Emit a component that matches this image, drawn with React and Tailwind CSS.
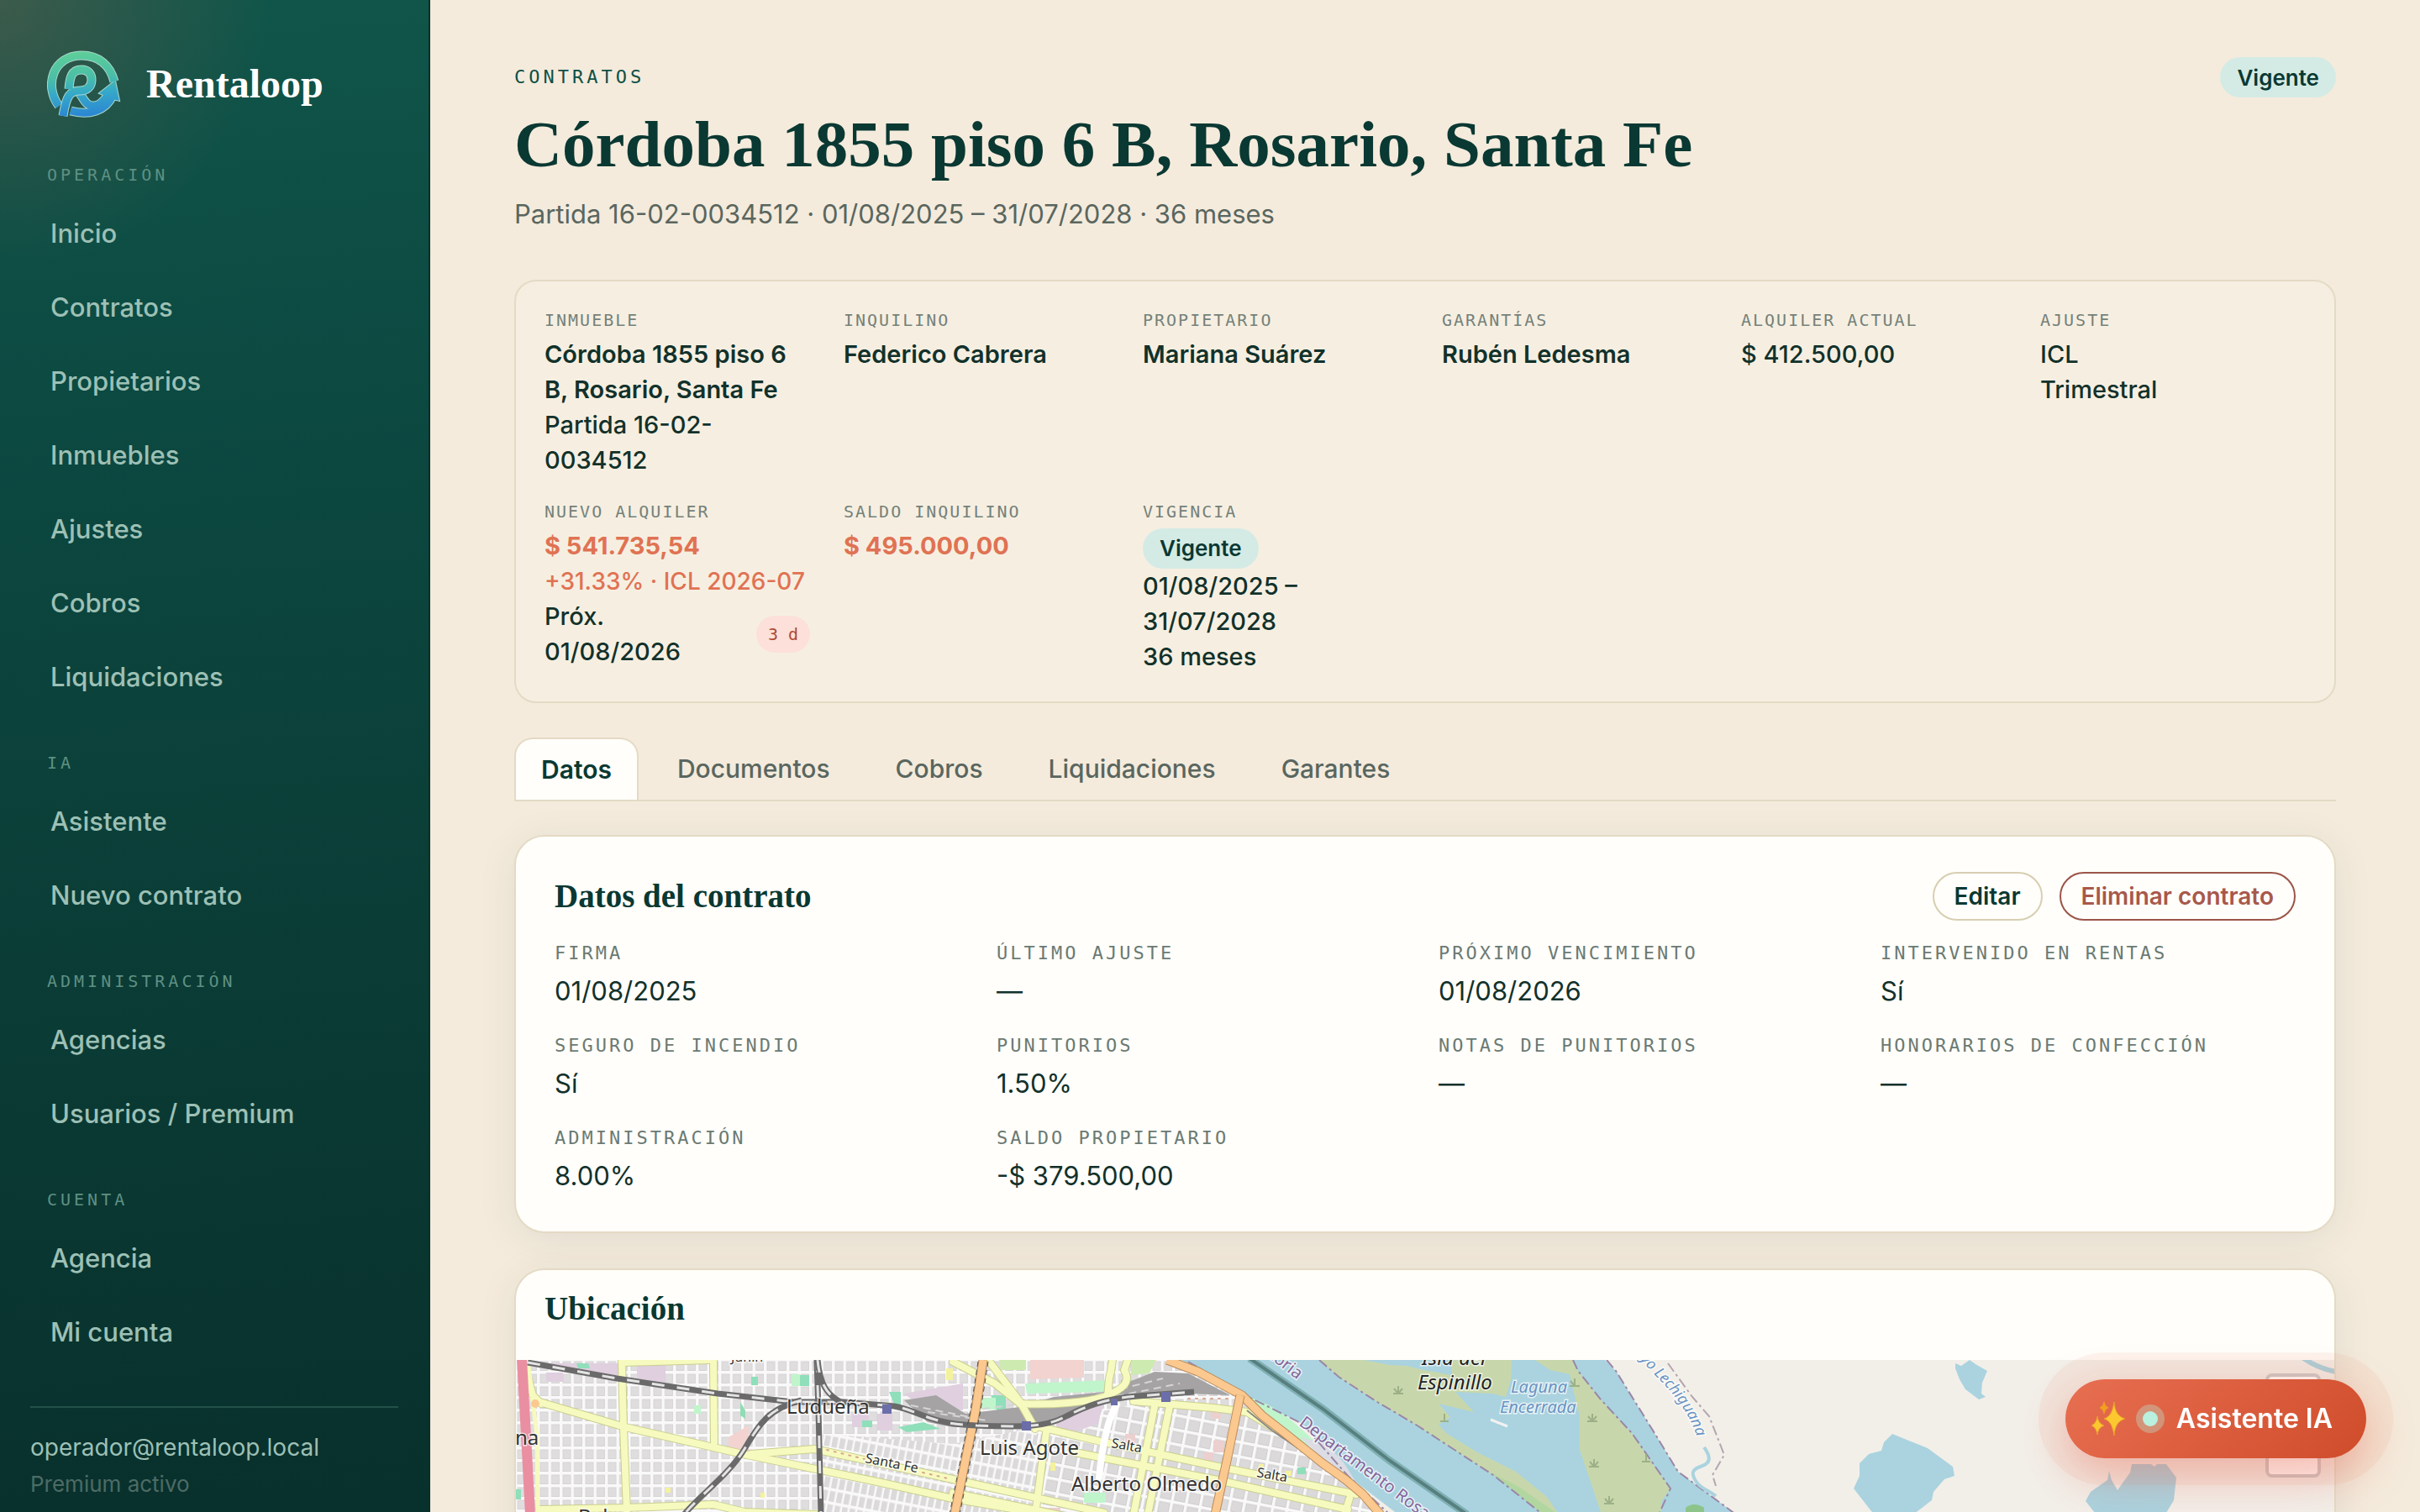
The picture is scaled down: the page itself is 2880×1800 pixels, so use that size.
import { useState } from 'react';

const NAV = [
  { title: 'Operación', items: ['Inicio', 'Contratos', 'Propietarios', 'Inmuebles', 'Ajustes', 'Cobros', 'Liquidaciones'] },
  { title: 'IA', items: ['Asistente', 'Nuevo contrato'] },
  { title: 'Administración', items: ['Agencias', 'Usuarios / Premium'] },
  { title: 'Cuenta', items: ['Agencia', 'Mi cuenta'] },
];

const TABS = ['Datos', 'Documentos', 'Cobros', 'Liquidaciones', 'Garantes'];

const DETAILS = [
  ['Firma', '01/08/2025'],
  ['Último ajuste', '—'],
  ['Próximo vencimiento', '01/08/2026'],
  ['Intervenido en rentas', 'Sí'],
  ['Seguro de incendio', 'Sí'],
  ['Punitorios', '1.50%'],
  ['Notas de punitorios', '—'],
  ['Honorarios de confección', '—'],
  ['Administración', '8.00%'],
  ['Saldo propietario', '-$ 379.500,00'],
];

const Logo = () => (
  <svg viewBox="0 0 88 80" className="h-[80px] w-[88px]" fill="none" aria-hidden="true">
    <defs>
      <linearGradient id="logo-fill" gradientUnits="userSpaceOnUse" x1="40" y1="0" x2="46" y2="78">
        <stop offset="0" stopColor="#5fcf98" />
        <stop offset="0.4" stopColor="#4bbfa6" />
        <stop offset="0.65" stopColor="#36a9c9" />
        <stop offset="1" stopColor="#2b86d3" />
      </linearGradient>
    </defs>
    {/* light outline under the coloured strokes */}
    <g stroke="#a9d8cd" strokeWidth="11">
      <path d="M14 66C-4 42 7 6 41 6c21 0 34 12 39 31" />
      <path d="M28 72c22 6 42 0 50-18" />
      <path d="M38 50c5 6 8 17 18 16 9-1 12-8 19-15" />
      <path d="M62 51l19-15 5 24-8-2z" fill="#a9d8cd" strokeWidth="2" />
    </g>
    <g stroke="url(#logo-fill)" strokeWidth="9">
      <path d="M14 66C-4 42 7 6 41 6c21 0 34 12 39 31" />
      <path d="M28 72c22 6 42 0 50-18" />
      <path d="M38 50c5 6 8 17 18 16 9-1 12-8 19-15" />
      <path d="M62 51l19-15 5 24-8-2z" fill="url(#logo-fill)" strokeWidth="0" />
    </g>
    <path d="M26 46c1-14 3-23 15-23 9 0 12 6 12 12 0 9-6 13-14 13-12 0-16 6-20 30" stroke="#a9d8cd" strokeWidth="11" />
    <path d="M26 46c1-14 3-23 15-23 9 0 12 6 12 12 0 9-6 13-14 13-12 0-16 6-20 30" stroke="url(#logo-fill)" strokeWidth="9" />
  </svg>
);

const Sparkles = () => (
  <svg viewBox="0 0 42 42" className="h-[42px] w-[42px]" aria-hidden="true">
    <g stroke="#e9a02c" strokeWidth="1">
      <path d="M28 1c1 11 4 17 13 20-9 3-12 9-13 20-2-11-4-17-12-20 8-3 10-9 12-20z" fill="#fdc82f" />
      <path d="M8 18c1 6 3 9 8 11-5 2-7 5-8 11-1-6-3-9-7-11 4-2 6-5 7-11z" fill="#fdc82f" />
      <path d="M16 1c1 4 2 5 5 7-3 1-4 3-5 7-1-4-2-6-5-7 3-2 4-3 5-7z" fill="#f59f1c" />
    </g>
  </svg>
);

const Sidebar = () => (
  <aside className="flex w-[512px] shrink-0 flex-col border-r-2 border-[#0a3029] bg-[radial-gradient(circle_at_0_0,rgba(232,111,82,0.2),transparent_320px),linear-gradient(175deg,#11564a_0%,#0c4a42_25%,#0a3832_75%,#08302c_100%)] px-9 pt-[60px]">
    <a href="#inicio" className="flex items-center gap-[30px] pl-5">
      <Logo />
      <span className="font-['Liberation_Serif',serif] text-[48px] leading-[60px] font-bold text-white">Rentaloop</span>
    </a>
    <nav className="pt-[54px]">
      {NAV.map((group) => (
        <div key={group.title} className="pb-12">
          <h2 className="pb-4 pl-5 font-['DejaVu_Sans_Mono',monospace] text-[20px] leading-7 tracking-[4px] text-[#5f9083] uppercase">
            {group.title}
          </h2>
          <ul className="flex flex-col gap-2">
            {group.items.map((item) => (
              <li key={item}>
                <a href="#seccion" className="flex h-20 items-center px-6 text-[31px] font-medium text-[#9dc0b5]">{item}</a>
              </li>
            ))}
          </ul>
        </div>
      ))}
    </nav>
    <div className="border-t-2 border-[#23524a] pt-6">
      <p className="text-[28px] leading-[46px] text-[#9dc0b5]">operador@rentaloop.local</p>
      <p className="text-[26px] leading-[42px] text-[#4d6b65]">Premium activo</p>
    </div>
  </aside>
);

const StatusBadge = () => (
  <span className="inline-flex h-12 items-center self-start rounded-full bg-[#d4ebe5] px-5 text-[26px] font-semibold text-[#0a3832]">
    Vigente
  </span>
);

const SummaryItem = ({ label, children }) => (
  <div>
    <dt className="pb-[6px] font-['DejaVu_Sans_Mono',monospace] text-[20px] leading-7 tracking-[2px] text-[#75817a] uppercase">{label}</dt>
    <dd className="flex flex-col text-[29px] leading-[42px] font-medium">{children}</dd>
  </div>
);

const Summary = () => (
  <dl className="mt-[55px] grid grid-cols-6 gap-x-10 gap-y-[26px] rounded-[26px] border-2 border-[#e4dac5] bg-[#f6efe1] px-[34px] pt-8 pb-8">
    <SummaryItem label="Inmueble">
      <span className="font-semibold">Córdoba 1855 piso 6 B, Rosario, Santa Fe</span>
      <span>Partida 16-02-<br />0034512</span>
    </SummaryItem>
    <SummaryItem label="Inquilino"><span className="font-semibold">Federico Cabrera</span></SummaryItem>
    <SummaryItem label="Propietario"><span className="font-semibold">Mariana Suárez</span></SummaryItem>
    <SummaryItem label="Garantías"><span className="font-semibold">Rubén Ledesma</span></SummaryItem>
    <SummaryItem label="Alquiler actual"><span>$ 412.500,00</span></SummaryItem>
    <SummaryItem label="Ajuste">
      <span>ICL</span>
      <span>Trimestral</span>
    </SummaryItem>
    <SummaryItem label="Nuevo alquiler">
      <span className="font-bold text-[#e07253]">$ 541.735,54</span>
      <span className="text-[28px] whitespace-nowrap text-[#e07253]">+31.33% · ICL 2026-07</span>
      <span className="flex items-center justify-between">
        <span>Próx.<br />01/08/2026</span>
        <span className="flex h-11 items-center rounded-full bg-[#fce0d9] px-[14px] font-['DejaVu_Sans_Mono',monospace] text-[20px] font-medium text-[#b04a35]">3 d</span>
      </span>
    </SummaryItem>
    <SummaryItem label="Saldo inquilino"><span className="font-bold text-[#e07253]">$ 495.000,00</span></SummaryItem>
    <SummaryItem label="Vigencia">
      <StatusBadge />
      <span>01/08/2025 –<br />31/07/2028</span>
      <span>36 meses</span>
    </SummaryItem>
  </dl>
);

const Tabs = () => {
  const [active, setActive] = useState('Datos');
  return (
    <div role="tablist" className="mt-[41px] flex gap-[14px] border-b-2 border-[#e4dac5]">
      {TABS.map((tab) => (
        <button
          key={tab}
          role="tab"
          aria-selected={tab === active}
          onClick={() => setActive(tab)}
          className={
            tab === active
              ? 'h-[74px] rounded-t-[22px] border-2 border-b-0 border-[#e4dac5] bg-[#fffefa] px-[30px] text-[30px] font-semibold text-[#0a3832]'
              : 'h-[74px] px-8 text-[30px] font-medium text-[#5a665f]'
          }
        >
          {tab}
        </button>
      ))}
    </div>
  );
};

const Details = () => (
  <section className="mt-10 rounded-[36px] border-2 border-[#e4dac5] bg-[#fffefa] px-[46px] pt-[42px] pb-[44px] shadow-[0_8px_48px_rgba(10,56,50,0.08)]">
    <div className="flex items-center justify-between">
      <h2 className="font-['Liberation_Serif',serif] text-[39px] leading-[52px] font-bold text-[#0a3832]">Datos del contrato</h2>
      <div className="flex gap-5">
        <button className="h-[58px] rounded-full border-2 border-[#d8ceb2] px-6 text-[28px] font-semibold text-[#0a3832]">Editar</button>
        <button className="h-[58px] rounded-full border-2 border-[#9c5549] px-6 text-[28px] font-semibold text-[#a8584b]">Eliminar contrato</button>
      </div>
    </div>
    <dl className="grid grid-cols-4 gap-x-8 gap-y-7 pt-6">
      {DETAILS.map(([label, value]) => (
        <div key={label}>
          <dt className="pb-2 font-['DejaVu_Sans_Mono',monospace] text-[22px] leading-[30px] tracking-[3px] text-[#6b7a73] uppercase">{label}</dt>
          <dd className="text-[31px] leading-[44px]">{value}</dd>
        </div>
      ))}
    </dl>
  </section>
);

const YELLOW_ROADS = [
  'M28 50L130 80 270 112 430 145 520 165 700 196',
  'M126 0L128 80 132 180',
  'M235 0L236 98',
  'M128 3L230 0',
  'M28 178L132 176 235 172 272 181 360 184',
  'M280 112L355 106 520 142 700 182',
  'M14 20L20 42 30 52',
  'M520 2L570 28 600 52',
  'M562 0L600 50 618 82',
  'M600 52C640 54 680 50 700 44C724 34 732 26 724 12L728 0M710 0L708 14C704 26 706 34 704 42',
  'M616 78L700 98 840 128 1000 160',
  'M665 110L840 144 990 178',
  'M520 158L700 196',
  'M631 86L618 184',
  'M760 55L735 184',
  'M778 55L752 184',
  'M735 49L830 57 870 62 930 98',
  'M992 165L986 184',
];

const RAILS = [
  'M14 3L120 22 240 40 330 50 390 50 450 55C480 60 490 76 547 78S630 80 653 68 700 46 740 43L807 38',
  'M358 0L360 60 363 184',
  'M359 0C362 30 370 42 390 52',
  'M340 48C300 58 290 76 272 106S220 160 200 184',
];

const COAST = 'M775 0L812 14 864 42 888 66 915 87 960 123 988 143 1008 160 1029 184';

const LocationMap = () => (
  <svg viewBox="0 0 2164 640" preserveAspectRatio="xMinYMin slice" className="block h-[640px] w-full" role="img" aria-label="Mapa de ubicación">
    <defs>
      <pattern id="blocks" width="13.5" height="15" patternUnits="userSpaceOnUse">
        <rect width="13.5" height="15" fill="#faf9f9" />
        <rect x="1.5" y="1.5" width="10" height="11.5" fill="#d6d4d4" />
        <rect x="2.5" y="2.5" width="8" height="9.5" fill="#dfddde" />
      </pattern>
      <pattern id="blocks-narrow" width="9" height="16" patternUnits="userSpaceOnUse" patternTransform="rotate(11)">
        <rect width="9" height="16" fill="#faf9f9" />
        <rect x="1" y="1.5" width="6.5" height="12.5" fill="#dbd9da" />
      </pattern>
      <pattern id="blocks-wide" width="17" height="17" patternUnits="userSpaceOnUse" patternTransform="rotate(11)">
        <rect width="17" height="17" fill="#faf9f9" />
        <rect x="1.5" y="1.5" width="13.5" height="13.5" fill="#cfcdcd" />
        <rect x="2.5" y="2.5" width="11.5" height="11.5" fill="#dbd9da" />
      </pattern>
      <path id="stream" d="M1338 -1C1356 20 1374 34 1388 56S1408 92 1412 126" />
    </defs>

    <rect width="2164" height="640" fill="#f2efe9" />
    <path d="M0 0H780L864 42 960 123 1029 182 1060 640H0z" fill="url(#blocks)" />
    <path d="M365 88L520 100 620 80 640 184 365 184z" fill="url(#blocks-narrow)" />
    <path d="M620 78L740 52 870 58 960 123 1029 184 620 184z" fill="url(#blocks-wide)" />

    {/* zones and parks */}
    <path d="M30 4h92v18l-30-4-62-10zM36 15h20v11H36zM144 4h34v24l-34-6zM400 64h20v16h-20zM430 64h18v20h-18zM462 40l70-12v32l-50-4zM640 70l60-18-8 24-44 16z" fill="#dfcfdf" />
    <path d="M253 92l24-14v34l-24-6zM612 0h64v21l-64 2z" fill="#f2d3d0" />
    <path d="M827 60h12v10h-12zM725 88h12v12h-12zM830 96h12v14h-12zM818 110h12v12h-12zM630 176h18v8h-18z" fill="#eccfcf" />
    <path d="M72 4h14l2 6H74zM280 20h8v10h-8zM336 18h13v13h-13zM444 38h14v20l-8-6zM412 72h12v8h-12zM455 80l30-6 20 8-40 4zM565 42h18v20h-10zM0 154h6v12H0zM930 128h10v8h-10z" fill="#8fdfba" />
    <path d="M328 17h10v14h-10zM212 54h8v10h-8zM552 45h19v14h-19zM606 28l98-4-6 14-90 2zM676 158h26v12h-26zM870 46C900 66 920 76 940 96L955 106 930 98 900 80z" fill="#c0f5cc" />
    <path d="M575 0h32v12h-30zM614 50l40 4-34 24zM732 0h30l-8 16-22 2z" fill="#cdebb0" />
    <path d="M267 50l6 10v10l-6-4zM720 24h30v6h-30z" fill="#90dcb4" />
    <path d="M178 152h6v6h-6zM291 158h5v6h-5zM512 10h8v14h-8zM884 124h6v6h-6zM636 122h6v10h-6zM916 132h7v6h-7z" fill="#f4f29c" />

    {/* rail yard */}
    <path d="M462 48L500 42 535 64 600 56 640 44 700 38 760 14 800 16 850 42 800 40 740 44 700 52 630 76 560 80 520 80 490 74z" fill="#a5a3a4" />
    <path d="M470 54L540 68M490 62L560 72M690 42L770 22M700 46L790 28M540 60L620 50" stroke="#d6d4d4" strokeWidth="2" strokeDasharray="9 6" fill="none" />

    <g fill="none" strokeLinecap="round" strokeLinejoin="round">
      {YELLOW_ROADS.map((d) => <path key={d} d={d} stroke="#c9cf90" strokeWidth="10" />)}
      {YELLOW_ROADS.map((d) => <path key={d} d={d} stroke="#f7fabf" strokeWidth="8" />)}
      <path d="M715 53C704 70 698 100 694 140" stroke="#fff" strokeWidth="8" />
      <path d="M370 107L415 118M484 134L518 142M800 46L850 46" stroke="#d7a58d" strokeWidth="2" strokeDasharray="2 7" />
    </g>

    {/* river, islands and lagoons */}
    <path d="M792 0L868 42 936 76 990 138 1050 184H1452L1420 160 1383 133 1355 87 1309 13 1296 0z" fill="#aad3df" />
    <path d="M870 44C905 52 930 78 954 100L940 98C915 84 885 66 870 44z" fill="#c0f5cc" />
    <path d="M934 92L964 100 985 122 1000 146 985 140 960 118z" fill="#dcdce4" />
    <path d="M956 0L979 20 1025 50 1071 77 1117 107 1163 137 1199 163 1222 184H1362L1364 167 1374 153 1355 127 1328 87 1291 47 1264 13 1258 0z" fill="#c8d7ab" />
    <path d="M1008 0L1040 6 1060 7 1080 12 1114 18 1112 0zM1185 0L1184 24 1178 44 1162 40 1118 38 1140 62 1098 52 1112 68 1098 77 1107 87 1144 110 1190 133 1227 163 1241 184H1292L1266 107 1266 67 1254 17 1231 12 1213 0z" fill="#aad3df" />
    <path d="M1160 134L1192 150 1241 184H1222z" fill="#acd69d" opacity="0.8" />
    <path d="M1160 71l20 8" stroke="#f2f2f2" strokeWidth="3" />
    <path d="M1392 176q10-8 22 0v8h-22z" fill="#8cc48a" />
    <path d="M873 -2L960 58 1040 120 1132 184" stroke="#7fb0b4" strokeWidth="9" fill="none" />
    <path d="M873 -2L960 58 1040 120 1132 184" stroke="#587f7f" strokeWidth="4" fill="none" />
    <g stroke="#9a87a8" strokeWidth="2" strokeDasharray="12 4 3 4" fill="none">
      <path d="M956 0L979 20 1025 50 1071 77 1117 107 1163 137 1222 184M1258 0L1264 13 1291 47 1328 87 1374 153 1360 184M1298 0L1309 13 1355 87 1383 133 1452 184" />
      <path d="M800 2L868 42 936 76 990 138 1040 184" />
      <path d="M1371 4L1400 44 1420 67 1438 113 1424 137 1428 150" stroke="#b5a5af" />
    </g>
    <path d="M1414 104C1420 112 1424 122 1412 126S1398 134 1404 144 1418 154 1428 162" stroke="#aad3df" strokeWidth="4" fill="none" />
    <g fill="#aad3df">
      <path d="M1638 88L1660 97 1680 105 1710 127 1712 138 1700 142 1687 157 1685 167 1668 180 1640 200 1613 180 1592 153 1599 138 1599 123 1610 112 1625 108 1628 98z" />
      <path d="M1713 4L1720 7 1730 0 1737 5 1751 13 1745 27 1744 40 1749 44 1741 47 1725 35 1718 23 1713 10z" />
      <path d="M1896 132L1899 143 1906 155 1921 134 1923 124H1946L1950 127 1953 124H1964L1976 140 1973 167 1964 182H1879L1868 168 1874 157 1894 143z" />
    </g>
    <path d="M2126 -3Q2144 10 2166 14" stroke="#aad3df" strokeWidth="6" fill="none" />
    <g stroke="#9db087" strokeWidth="2" fill="none">
      <path d="M1044 40h12M1050 40v-9M1050 40l-5-6M1050 40l5-6M1275 73h12M1281 73v-9M1281 73l-5-6M1281 73l5-6M1277 127h12M1283 127v-9M1283 127l-5-6M1283 127l5-6M1295 171h12M1301 171v-9M1301 171l-5-6M1301 171l5-6M1254 31h12M1260 31v-9M1260 31l-5-6M1340 121h10M1345 121v-9M1100 73h10M1105 73v-9" />
    </g>

    {/* main roads and railways */}
    <g fill="none" strokeLinejoin="round">
      <path d="M870 60L900 84 944 114" stroke="#8a8888" strokeWidth="2" />
      {[COAST, 'M556 0L547 60 522 184', 'M862 42L846 120 832 184'].map((d) => (
        <g key={d}>
          <path d={d} stroke="#b98a5a" strokeWidth="11" />
          <path d={d} stroke="#fbc98f" strokeWidth="9" />
        </g>
      ))}
      <path d="M14 0L25 90 26 184" stroke="#f7fabf" strokeWidth="5" />
      <path d="M7 -2L12 90 17 184" stroke="#e98fa1" strokeWidth="12" />
      {RAILS.map((d) => (
        <g key={d}>
          <path d={d} stroke="#6b6a6a" strokeWidth="7" />
          <path d={d} stroke="#e4e4e4" strokeWidth="3" strokeDasharray="15 15" />
        </g>
      ))}
      <path d="M550 2L541 60 516 184M562 2L553 60 528 184" stroke="#55504c" strokeWidth="1" strokeDasharray="6 4" />
      <circle cx="23" cy="52" r="5" fill="#fbc98f" />
    </g>
    <path d="M436 53h11v11h-11zM602 73h11v11h-11zM708 46h8v8h-8zM768 38h11v12h-11z" fill="#6b6ea8" />

    {/* place names */}
    <g className="font-['Noto_Sans',sans-serif]" paintOrder="stroke" stroke="rgba(255,255,255,0.7)" strokeWidth="3" fill="#333">
      <g fontSize="24">
        <text x="322" y="64">Ludueña</text>
        <text x="552" y="113">Luis Agote</text>
        <text x="661" y="156">Alberto Olmedo</text>
        <text x="-1" y="101">na</text>
        <text x="74" y="195">Belgrano</text>
      </g>
      <g fontSize="16">
        <text x="256" y="2">Junín</text>
        <text transform="translate(415 122) rotate(11)">Santa Fe</text>
        <text transform="translate(708 104) rotate(10)">Salta</text>
        <text transform="translate(881 139) rotate(10)">Salta</text>
      </g>
      <g fontSize="24" fontStyle="italic" fill="#222">
        <text x="1078" y="6">Isla del</text>
        <text x="1073" y="35">Espinillo</text>
      </g>
      <g fontSize="20" fontStyle="italic" fill="#6a93c2">
        <text x="1184" y="39">Laguna</text>
        <text x="1171" y="63">Encerrada</text>
        <text fontSize="18"><textPath href="#stream">yo Lechiguana</textPath></text>
      </g>
      <g fontSize="20" fill="#85659b">
        <text transform="translate(931 77) rotate(37)">Departamento Rosario</text>
        <text transform="translate(874 -20) rotate(38)">Victoria</text>
      </g>
    </g>
  </svg>
);

const Location = () => (
  <section className="mt-[42px] overflow-hidden rounded-[36px] border-2 border-[#e4dac5] bg-[#fffefa] shadow-[0_8px_48px_rgba(10,56,50,0.08)]">
    <h2 className="px-[34px] pt-5 pb-[35px] font-['Liberation_Serif',serif] text-[39px] leading-[52px] font-bold text-[#0a3832]">Ubicación</h2>
    <div className="relative">
      <LocationMap />
      <div className="absolute top-4 right-4 flex w-[66px] flex-col rounded-lg border-4 border-black/20 bg-white">
        <button aria-label="Acercar" className="h-[58px] border-b border-[#ccc]" />
        <button aria-label="Alejar" className="h-[58px]" />
      </div>
    </div>
  </section>
);

export default function App() {
  return (
    <div className="flex h-screen overflow-hidden bg-[#f4ebdc] font-['Inter',sans-serif] text-[#12312b]">
      <Sidebar />
      <main className="min-w-0 flex-1 overflow-hidden px-[100px] pt-[68px]">
        <header className="flex items-start justify-between">
          <div>
            <p className="pt-2 font-['DejaVu_Sans_Mono',monospace] text-[22px] leading-8 tracking-[4px] text-[#0f5046] uppercase">Contratos</p>
            <h1 className="pt-[14px] font-['Liberation_Serif',serif] text-[79px] leading-[100px] font-bold text-[#0a3832]">
              Córdoba 1855 piso 6 B, Rosario, Santa Fe
            </h1>
            <p className="pt-[10px] text-[31px] leading-[46px] text-[#5a665f]">Partida 16-02-0034512 · 01/08/2025 – 31/07/2028 · 36 meses</p>
          </div>
          <StatusBadge />
        </header>
        <Summary />
        <Tabs />
        <Details />
        <Location />
      </main>
      <button className="fixed right-16 bottom-16 flex h-[94px] items-center rounded-full bg-[linear-gradient(135deg,#e86f52,#cf4c2a)] pr-10 pl-[30px] text-[32px] font-semibold text-white shadow-[0_0_0_32px_rgba(232,111,82,0.08),0_20px_56px_rgba(232,90,70,0.4)]">
        <Sparkles />
        <span className="mr-[22px] ml-5 size-[18px] rounded-full bg-[#b9f0de] shadow-[0_0_0_8px_rgba(185,240,222,0.35)]" />
        Asistente IA
      </button>
    </div>
  );
}
